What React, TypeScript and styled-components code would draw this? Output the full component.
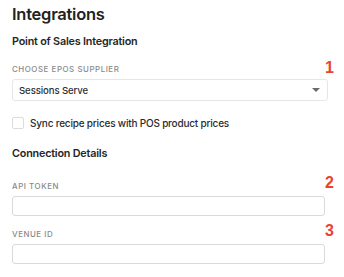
import React from 'react'
import styled, { createGlobalStyle } from 'styled-components'

const GlobalStyle = createGlobalStyle`
  html, body {
    margin: 0;
    padding: 0;
    background: #ffffff;
  }
  body {
    font-family: Inter, 'Noto Sans', sans-serif;
    color: #2a2a2a;
  }
`

const Page = styled.div`
  width: 344px;
  height: 277px;
  padding: 3px 0 0 12px;
  box-sizing: border-box;
  overflow: hidden;
`

const Title = styled.h1`
  margin: 0;
  font-size: 16.5px;
  line-height: 22px;
  font-weight: 600;
  letter-spacing: -0.25px;
  color: #222;
`

const SectionTitle = styled.h2<{ $mt: number }>`
  margin: ${({ $mt }) => $mt}px 0 0;
  font-size: 10.8px;
  line-height: 14px;
  font-weight: 600;
  letter-spacing: -0.2px;
  color: #262626;
`

const Field = styled.div<{ $mt: number }>`
  position: relative;
  margin-top: ${({ $mt }) => $mt}px;
`

const Label = styled.div`
  font-size: 7.9px;
  line-height: 10px;
  letter-spacing: 0.55px;
  text-transform: uppercase;
  color: #8a8a8a;
  font-weight: 500;
`

const Marker = styled.span<{ $top: number }>`
  position: absolute;
  right: 10px;
  top: ${({ $top }) => $top}px;
  font-family: 'Liberation Sans', Arial, sans-serif;
  font-weight: 700;
  font-size: 16px;
  line-height: 16px;
  color: #e8432f;
`

const Select = styled.div`
  margin-top: 5px;
  width: 316px;
  height: 22px;
  box-sizing: border-box;
  border: 1px solid #e6e6e6;
  border-radius: 3px;
  display: flex;
  align-items: center;
  justify-content: space-between;
  padding: 0 7px 0 6px;
  font-size: 9.6px;
  letter-spacing: -0.1px;
  font-weight: 500;
  color: #2f2f2f;
`

const Caret = styled.span`
  width: 0;
  height: 0;
  border-left: 4px solid transparent;
  border-right: 4px solid transparent;
  border-top: 4px solid #6b6b6b;
`

const CheckRow = styled.label`
  display: flex;
  align-items: center;
  gap: 6px;
  margin-top: 16px;
  font-size: 10px;
  line-height: 12px;
  letter-spacing: -0.2px;
  font-weight: 500;
  color: #2b2b2b;
`

const Box = styled.span`
  width: 12px;
  height: 12px;
  box-sizing: border-box;
  border: 1px solid #dcdcdc;
  border-radius: 2px;
`

const Input = styled.div`
  margin-top: 5px;
  width: 313px;
  height: 20px;
  box-sizing: border-box;
  border: 1px solid #dadada;
  border-radius: 3px;
`

export default function App() {
  return (
    <>
      <GlobalStyle />
      <Page>
        <Title>Integrations</Title>
        <SectionTitle $mt={10}>Point of Sales Integration</SectionTitle>
        <Field $mt={15}>
          <Label>Choose EPOS Supplier</Label>
          <Marker $top={-4}>1</Marker>
          <Select>
            <span>Sessions Serve</span>
            <Caret />
          </Select>
        </Field>
        <CheckRow>
          <Box />
          Sync recipe prices with POS product prices
        </CheckRow>
        <SectionTitle $mt={18}>Connection Details</SectionTitle>
        <Field $mt={20}>
          <Label>API Token</Label>
          <Marker $top={-6}>2</Marker>
          <Input />
        </Field>
        <Field $mt={13}>
          <Label>Venue ID</Label>
          <Marker $top={-6}>3</Marker>
          <Input />
        </Field>
      </Page>
    </>
  )
}
